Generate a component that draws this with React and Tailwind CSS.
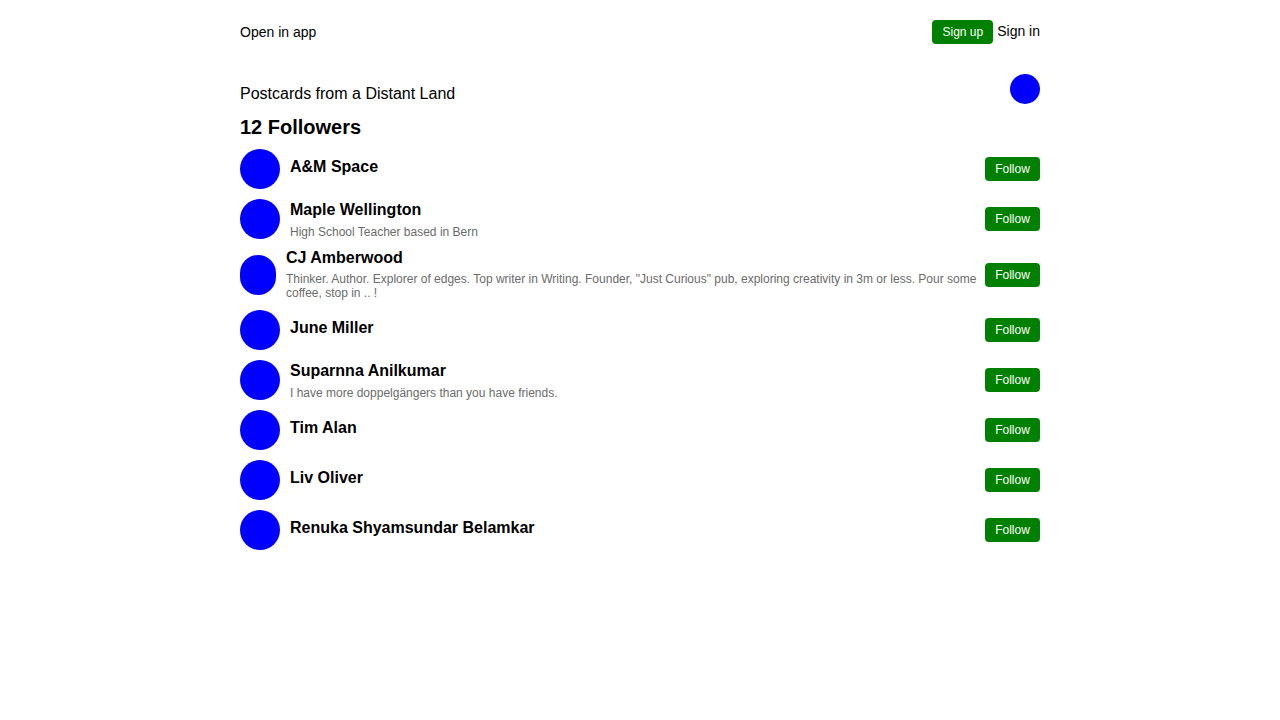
import React from "react";

const followers = [
  { name: "A&M Space", bio: "" },
  { name: "Maple Wellington", bio: "High School Teacher based in Bern" },
  {
    name: "CJ Amberwood",
    bio: 'Thinker. Author. Explorer of edges. Top writer in Writing. Founder, "Just Curious" pub, exploring creativity in 3m or less. Pour some coffee, stop in .. !',
    narrow: true,
  },
  { name: "June Miller", bio: "" },
  { name: "Suparnna Anilkumar", bio: "I have more doppelgängers than you have friends." },
  { name: "Tim Alan", bio: "" },
  { name: "Liv Oliver", bio: "" },
  { name: "Renuka Shyamsundar Belamkar", bio: "" },
];

export default function App() {
  return (
    <div
      className="min-h-[720px] bg-white text-black"
      style={{ fontFamily: '"Liberation Sans", Arial, Helvetica, sans-serif' }}
    >
      <div className="w-[800px] mx-auto pt-[20px]">
        <header className="flex items-center justify-between h-[24px]">
          <span className="text-[14px] leading-[16px]">Open in app</span>
          <div className="flex items-center gap-[4px]">
            <button className="h-[24px] px-[10px] rounded-[4px] bg-[#008000] text-white text-[12px] leading-[14px]">
              Sign up
            </button>
            <span className="text-[14px] leading-[16px] -mt-[2px]">Sign in</span>
          </div>
        </header>

        <div className="flex items-end justify-between mt-[30px]">
          <h1 className="text-[16px] leading-[18px] pb-[1px]">Postcards from a Distant Land</h1>
          <div className="w-[30px] h-[30px] rounded-full bg-[#0000ff]" />
        </div>

        <h2 className="text-[20px] leading-[24px] font-bold mt-[11px]">12 Followers</h2>

        <ul className="mt-[10px] flex flex-col gap-[10px]">
          {followers.map((f) => (
            <li key={f.name} className="flex items-center">
              <div
                className={
                  f.narrow
                    ? "w-[36px] h-[40px] rounded-full bg-[#0000ff] shrink-0"
                    : "w-[40px] h-[40px] rounded-full bg-[#0000ff] shrink-0"
                }
              />
              <div
                className={
                  f.narrow
                    ? "flex-1 ml-[10px] mr-[2px] pt-[1px]"
                    : "flex-1 ml-[10px] mr-[9px] pt-[2px]"
                }
              >
                <div
                  className={
                    f.narrow
                      ? "text-[16px] leading-[18px] font-bold mb-[4px] -mt-[1px] pb-[1px]"
                      : "text-[16px] leading-[18px] font-bold mb-[6px]"
                  }
                >
                  {f.name}
                </div>
                {f.bio && (
                  <p className="text-[12px] leading-[14px] text-[#6b6b6b]">{f.bio}</p>
                )}
              </div>
              <button className="shrink-0 h-[24px] w-[55px] rounded-[4px] bg-[#008000] text-white text-[12px] leading-[14px]">
                Follow
              </button>
            </li>
          ))}
        </ul>
      </div>
    </div>
  );
}
